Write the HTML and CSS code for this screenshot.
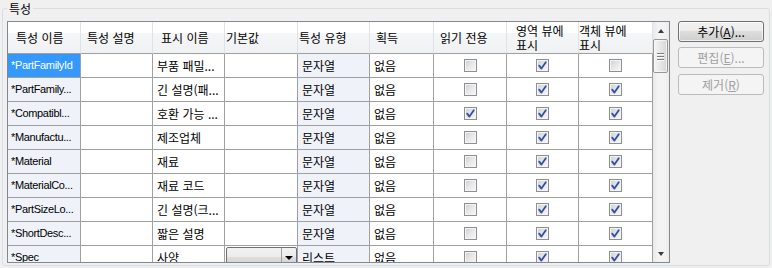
FILE: index.html
```html
<!DOCTYPE html>
<html lang="ko">
<head>
<meta charset="utf-8">
<title>특성</title>
<link rel="stylesheet" href="styles.css">
</head>
<body>
<fieldset class="group">
  <legend class="group-title">특성</legend>
  <div class="group-body">
    <div class="list">
      <div class="grid">
        <div class="hd">특성 이름</div>
        <div class="hd h-mid">특성 설명</div>
        <div class="hd">표시 이름</div>
        <div class="hd h-tight">기본값</div>
        <div class="hd h-tight">특성 유형</div>
        <div class="hd h-mid">획득</div>
        <div class="hd h-mid">읽기 전용</div>
        <div class="hd h-wide two">영역 뷰에<br>표시</div>
        <div class="hd h-none two">객체 뷰에<br>표시</div>

        <div class="c rh sel">*PartFamilyId</div>
        <div class="c"></div>
        <div class="c">부품 패밀...</div>
        <div class="c"></div>
        <div class="c ty">문자열</div>
        <div class="c">없음</div>
        <div class="c ck"><span class="cb"></span></div>
        <div class="c ck"><span class="cb"><svg viewBox="0 0 11 11" class="tick"><path d="M2.2 5.6 L4.4 8.6 L8.8 2.2"/></svg></span></div>
        <div class="c ck"><span class="cb"></span></div>

        <div class="c rh">*PartFamily...</div>
        <div class="c"></div>
        <div class="c">긴 설명(패...</div>
        <div class="c"></div>
        <div class="c ty">문자열</div>
        <div class="c">없음</div>
        <div class="c ck"><span class="cb"></span></div>
        <div class="c ck"><span class="cb"><svg viewBox="0 0 11 11" class="tick"><path d="M2.2 5.6 L4.4 8.6 L8.8 2.2"/></svg></span></div>
        <div class="c ck"><span class="cb"><svg viewBox="0 0 11 11" class="tick"><path d="M2.2 5.6 L4.4 8.6 L8.8 2.2"/></svg></span></div>

        <div class="c rh">*Compatibl...</div>
        <div class="c"></div>
        <div class="c">호환 가능 ...</div>
        <div class="c"></div>
        <div class="c ty">문자열</div>
        <div class="c">없음</div>
        <div class="c ck"><span class="cb"><svg viewBox="0 0 11 11" class="tick"><path d="M2.2 5.6 L4.4 8.6 L8.8 2.2"/></svg></span></div>
        <div class="c ck"><span class="cb"><svg viewBox="0 0 11 11" class="tick"><path d="M2.2 5.6 L4.4 8.6 L8.8 2.2"/></svg></span></div>
        <div class="c ck"><span class="cb"><svg viewBox="0 0 11 11" class="tick"><path d="M2.2 5.6 L4.4 8.6 L8.8 2.2"/></svg></span></div>

        <div class="c rh">*Manufactu...</div>
        <div class="c"></div>
        <div class="c">제조업체</div>
        <div class="c"></div>
        <div class="c ty">문자열</div>
        <div class="c">없음</div>
        <div class="c ck"><span class="cb"></span></div>
        <div class="c ck"><span class="cb"><svg viewBox="0 0 11 11" class="tick"><path d="M2.2 5.6 L4.4 8.6 L8.8 2.2"/></svg></span></div>
        <div class="c ck"><span class="cb"><svg viewBox="0 0 11 11" class="tick"><path d="M2.2 5.6 L4.4 8.6 L8.8 2.2"/></svg></span></div>

        <div class="c rh">*Material</div>
        <div class="c"></div>
        <div class="c">재료</div>
        <div class="c"></div>
        <div class="c ty">문자열</div>
        <div class="c">없음</div>
        <div class="c ck"><span class="cb"></span></div>
        <div class="c ck"><span class="cb"><svg viewBox="0 0 11 11" class="tick"><path d="M2.2 5.6 L4.4 8.6 L8.8 2.2"/></svg></span></div>
        <div class="c ck"><span class="cb"><svg viewBox="0 0 11 11" class="tick"><path d="M2.2 5.6 L4.4 8.6 L8.8 2.2"/></svg></span></div>

        <div class="c rh">*MaterialCo...</div>
        <div class="c"></div>
        <div class="c">재료 코드</div>
        <div class="c"></div>
        <div class="c ty">문자열</div>
        <div class="c">없음</div>
        <div class="c ck"><span class="cb"></span></div>
        <div class="c ck"><span class="cb"><svg viewBox="0 0 11 11" class="tick"><path d="M2.2 5.6 L4.4 8.6 L8.8 2.2"/></svg></span></div>
        <div class="c ck"><span class="cb"><svg viewBox="0 0 11 11" class="tick"><path d="M2.2 5.6 L4.4 8.6 L8.8 2.2"/></svg></span></div>

        <div class="c rh">*PartSizeLo...</div>
        <div class="c"></div>
        <div class="c">긴 설명(크...</div>
        <div class="c"></div>
        <div class="c ty">문자열</div>
        <div class="c">없음</div>
        <div class="c ck"><span class="cb"></span></div>
        <div class="c ck"><span class="cb"><svg viewBox="0 0 11 11" class="tick"><path d="M2.2 5.6 L4.4 8.6 L8.8 2.2"/></svg></span></div>
        <div class="c ck"><span class="cb"><svg viewBox="0 0 11 11" class="tick"><path d="M2.2 5.6 L4.4 8.6 L8.8 2.2"/></svg></span></div>

        <div class="c rh">*ShortDesc...</div>
        <div class="c"></div>
        <div class="c">짧은 설명</div>
        <div class="c"></div>
        <div class="c ty">문자열</div>
        <div class="c">없음</div>
        <div class="c ck"><span class="cb"></span></div>
        <div class="c ck"><span class="cb"><svg viewBox="0 0 11 11" class="tick"><path d="M2.2 5.6 L4.4 8.6 L8.8 2.2"/></svg></span></div>
        <div class="c ck"><span class="cb"><svg viewBox="0 0 11 11" class="tick"><path d="M2.2 5.6 L4.4 8.6 L8.8 2.2"/></svg></span></div>

        <div class="c rh">*Spec</div>
        <div class="c"></div>
        <div class="c">사양</div>
        <div class="c cbx"><div class="combo"><span class="combo-val"></span><span class="combo-btn"><span class="tri-down"></span></span></div></div>
        <div class="c ty">리스트</div>
        <div class="c">없음</div>
        <div class="c ck"><span class="cb"></span></div>
        <div class="c ck"><span class="cb"><svg viewBox="0 0 11 11" class="tick"><path d="M2.2 5.6 L4.4 8.6 L8.8 2.2"/></svg></span></div>
        <div class="c ck"><span class="cb"><svg viewBox="0 0 11 11" class="tick"><path d="M2.2 5.6 L4.4 8.6 L8.8 2.2"/></svg></span></div>
      </div>
      <div class="vscroll">
        <div class="sb-btn"><span class="sb-up"></span></div>
        <div class="sb-thumb"><span class="grip"></span><span class="grip"></span><span class="grip"></span></div>
        <div class="sb-track"></div>
        <div class="sb-btn"><span class="sb-down"></span></div>
      </div>
    </div>
    <div class="buttons">
      <div class="btn">추가(<u>A</u>)...</div>
      <div class="btn disabled">편집(<u>E</u>)...</div>
      <div class="btn disabled third">제거(<u>R</u>)</div>
    </div>
  </div>
</fieldset>
</body>
</html>
```
FILE: styles.css
```css
html, body {
  margin: 0;
  padding: 0;
  background: #f0f0f0;
}
body {
  width: 772px;
  height: 268px;
  overflow: hidden;
  font-family: "Noto Sans CJK KR", "Noto Sans", sans-serif;
  font-size: 12px;
  color: #000;
}
.group {
  margin: 0 2px 2px 2px;
  padding: 4px 5px 2px 4px;
  border: 1px solid #d5dfe5;
  border-radius: 3px;
  min-width: 0;
  box-sizing: border-box;
  height: 266px;
}
.group-title {
  padding: 0 2px;
  line-height: 17px;
  font-size: 12px;
}
.group-body {
  display: flex;
  gap: 8px;
  align-items: flex-start;
}
.list {
  width: 663px;
  height: 242px;
  box-sizing: border-box;
  border: 1px solid #828790;
  background: #fff;
  display: flex;
  overflow: hidden;
  flex: none;
}
.grid {
  display: grid;
  grid-template-columns: 73px 72px 72px 73px 72px 64px 73px 72px 74px;
  grid-template-rows: 32px;
  grid-auto-rows: 24px;
  flex: none;
  align-self: flex-start;
}
.hd {
  box-sizing: border-box;
  border-right: 1px solid #dfe3e8;
  border-bottom: 1px solid #a0a0a0;
  background: linear-gradient(to bottom, #ffffff 0%, #ffffff 34%, #f5f6f7 34%, #f0f1f3 100%);
  display: flex;
  align-items: center;
  padding-left: 8px;
  white-space: nowrap;
  line-height: 14px;
}
.hd.h-mid { padding-left: 6px; }
.hd.h-tight { padding-left: 1px; }
.hd.h-wide { padding-left: 9px; }
.hd.h-none { padding-left: 0; }
.c {
  box-sizing: border-box;
  border-right: 1px solid #a0a0a0;
  border-bottom: 1px solid #a0a0a0;
  padding-left: 4px;
  line-height: 23px;
  white-space: nowrap;
  overflow: hidden;
}
.c.rh {
  background: #eff3f9;
  font-family: "Liberation Sans", Arial, sans-serif;
  font-size: 11px;
  letter-spacing: -0.35px;
  padding-left: 3px;
}
.c.sel {
  background: #3399ff;
  color: #fff;
}
.c.ty {
  background: #eff3f9;
}
.c.ck {
  display: flex;
  align-items: center;
  justify-content: center;
  padding-left: 0;
}
.cb {
  width: 13px;
  height: 13px;
  box-sizing: border-box;
  border: 1px solid #8f8f8f;
  background: linear-gradient(135deg, #cdd0d5 0%, #e8e9eb 55%, #f7f7f7 100%);
  box-shadow: inset 0 0 0 1px #f4f4f4;
  display: flex;
  align-items: center;
  justify-content: center;
}
.tick {
  width: 11px;
  height: 11px;
  fill: none;
  stroke: #3550a0;
  stroke-width: 1.8;
  stroke-linecap: round;
  stroke-linejoin: round;
}
.c.cbx {
  padding: 1px 0 0 1px;
}
.combo {
  height: 21px;
  box-sizing: border-box;
  border: 1px solid #707070;
  border-radius: 2px;
  background: linear-gradient(to bottom, #f2f2f2 0%, #ebebeb 50%, #dddddd 50%, #cfcfcf 100%);
  display: flex;
}
.combo-val {
  flex: 1;
}
.combo-btn {
  width: 14px;
  border-left: 1px solid #a0a0a0;
  display: flex;
  align-items: center;
  justify-content: center;
}
.tri-down {
  width: 0;
  height: 0;
  border-left: 4px solid transparent;
  border-right: 4px solid transparent;
  border-top: 4px solid #000;
}
.vscroll {
  width: 16px;
  flex: none;
  display: flex;
  flex-direction: column;
  background: linear-gradient(to right, #e9e9e9 0%, #f3f3f3 30%, #f3f3f3 70%, #ececec 100%);
}
.sb-btn {
  height: 17px;
  flex: none;
  display: flex;
  align-items: center;
  justify-content: center;
}
.sb-up {
  width: 0;
  height: 0;
  border-left: 3.5px solid transparent;
  border-right: 3.5px solid transparent;
  border-bottom: 4px solid #3c3c3c;
}
.sb-down {
  width: 0;
  height: 0;
  border-left: 3.5px solid transparent;
  border-right: 3.5px solid transparent;
  border-top: 4px solid #3c3c3c;
}
.sb-thumb {
  height: 34px;
  margin: 0 1px 0 0;
  box-sizing: border-box;
  border: 1px solid #979797;
  border-radius: 2px;
  background: linear-gradient(to right, #f4f4f4 0%, #e6e6e6 50%, #d6d6d6 100%);
  box-shadow: inset 0 0 0 1px rgba(255,255,255,0.6);
  display: flex;
  flex-direction: column;
  align-items: center;
  justify-content: center;
  gap: 2px;
}
.grip {
  width: 7px;
  height: 1px;
  background: #7d7d7d;
  box-shadow: 0 1px 0 #fafafa;
}
.sb-track {
  flex: 1;
}
.buttons {
  width: 86px;
  flex: none;
  display: flex;
  flex-direction: column;
  gap: 5px;
}
.btn {
  height: 21px;
  box-sizing: border-box;
  border: 1px solid #707070;
  border-radius: 3px;
  background: linear-gradient(to bottom, #f2f2f2 0%, #ebebeb 50%, #dddddd 50%, #cfcfcf 100%);
  box-shadow: inset 0 0 0 1px rgba(255,255,255,0.7);
  text-align: center;
  line-height: 19px;
  white-space: nowrap;
}
.btn u {
  text-decoration: underline;
  text-underline-offset: 1px;
}
.btn.disabled {
  border-color: #b8bcbf;
  background: #f4f4f4;
  box-shadow: none;
  color: #a0a0a0;
}
.btn.third {
  margin-top: 1px;
}
```
